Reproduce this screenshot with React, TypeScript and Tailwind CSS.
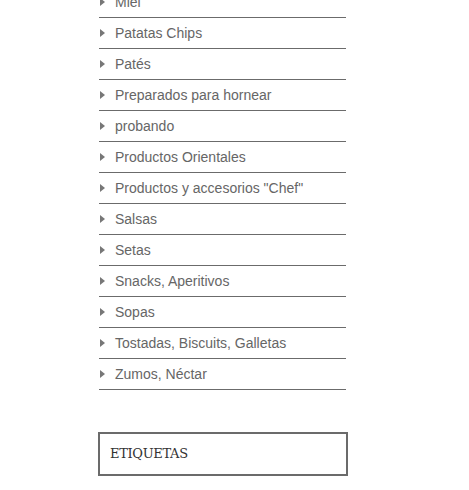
import React from 'react';

const categories = [
  'Miel',
  'Patatas Chips',
  'Patés',
  'Preparados para hornear',
  'probando',
  'Productos Orientales',
  'Productos y accesorios "Chef"',
  'Salsas',
  'Setas',
  'Snacks, Aperitivos',
  'Sopas',
  'Tostadas, Biscuits, Galletas',
  'Zumos, Néctar',
];

export default function App() {
  return (
    <div className="w-[469px] h-[490px] bg-white overflow-hidden">
      <div className="ml-[99px] w-[247px] mt-[-13px]">
        <ul className="font-['Liberation_Sans',Arial,sans-serif] text-[14px] text-[#666]">
          {categories.map((name) => (
            <li key={name} className="h-[31px] flex items-center border-b border-[#6b6b6b]">
              <span className="w-0 h-0 ml-[1px] border-y-[4px] border-y-transparent border-l-[5px] border-l-[#777]" />
              <span className="ml-[10px] leading-none">{name}</span>
            </li>
          ))}
        </ul>
      </div>
      <div className="ml-[98px] mt-[42px] w-[250px] h-[44px] border-2 border-[#6b6b6b] flex items-center px-[10px]">
        <h3 className="font-['DejaVu_Serif','Liberation_Serif',serif] text-[13px] text-[#333] tracking-tight">ETIQUETAS</h3>
      </div>
    </div>
  );
}
